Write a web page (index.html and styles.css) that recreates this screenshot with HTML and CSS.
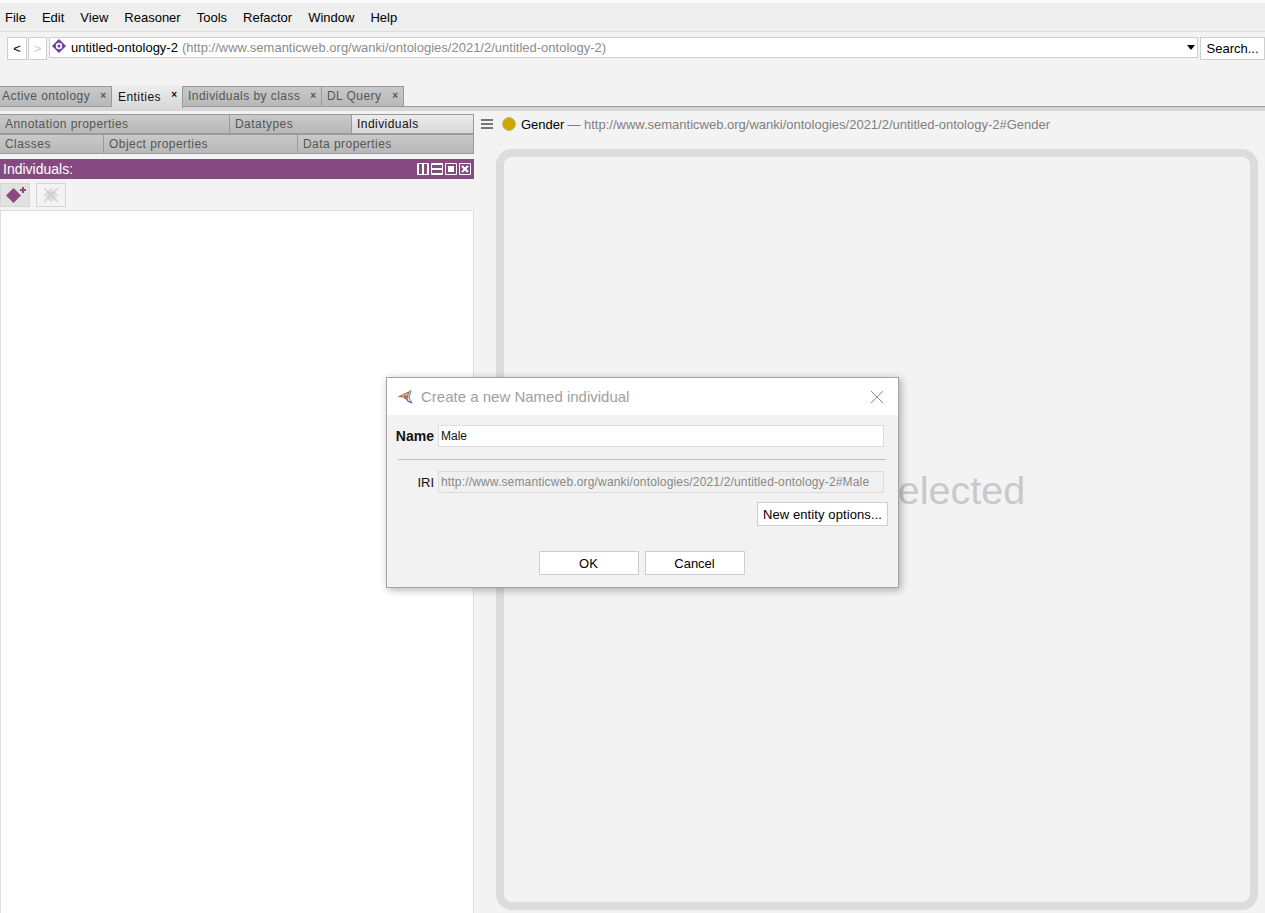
FILE: index.html
```html
<!DOCTYPE html>
<html lang="en">

<head>
    <meta charset="UTF-8">
    <title>untitled-ontology-2</title>
    <link rel="stylesheet" href="styles.css">
</head>

<body>
    <div id="menuBar">
        <span>File</span>
        <span>Edit</span>
        <span>View</span>
        <span>Reasoner</span>
        <span>Tools</span>
        <span>Refactor</span>
        <span>Window</span>
        <span>Help</span>
    </div>

    <div id="navRow">
        <button class="navButton">&lt;</button>
        <button class="navButton disabled">&gt;</button>
        <div id="ontologyBox">
            <svg class="ontologyIcon" width="14" height="14" viewBox="0 0 14 14">
                <path d="M7 0 14 7 7 14 0 7Z" fill="#6b3fa0" />
                <circle cx="7" cy="7" r="3.2" fill="#fff" />
                <circle cx="7" cy="7" r="1.6" fill="#6b3fa0" />
            </svg>
            <span class="ontologyName">untitled-ontology-2</span>
            <span class="ontologyIri">(http://www.semanticweb.org/wanki/ontologies/2021/2/untitled-ontology-2)</span>
            <span class="comboArrow"></span>
        </div>
        <button id="searchButton">Search...</button>
    </div>

    <div id="tabBar">
        <div class="tab tabActiveOntology">Active ontology<span class="tabClose">×</span></div>
        <div class="tab tabEntities selected">Entities<span class="tabClose">×</span></div>
        <div class="tab tabIndividuals">Individuals by class<span class="tabClose">×</span></div>
        <div class="tab tabQuery">DL Query<span class="tabClose">×</span></div>
    </div>
    <div id="tabStrip"></div>

    <div id="workspace">
        <div id="leftPanel">
            <div class="subTabRow">
                <div class="subTab w229">Annotation properties</div>
                <div class="subTab w122">Datatypes</div>
                <div class="subTab selected w122b">Individuals</div>
            </div>
            <div class="subTabRow">
                <div class="subTab w104">Classes</div>
                <div class="subTab w194">Object properties</div>
                <div class="subTab w176">Data properties</div>
            </div>

            <div id="viewHeader">
                <span>Individuals:</span>
                <div id="viewButtons">
                    <svg width="12" height="12" viewBox="0 0 12 12">
                        <path d="M.5.5h11v11H.5Z" fill="none" stroke="#fff" />
                        <path d="M1 1h1v10H1ZM5 1h2v10H5ZM10 1h1v10h-1Z" fill="#fff" />
                    </svg>
                    <svg width="12" height="12" viewBox="0 0 12 12">
                        <path d="M.5.5h11v11H.5Z" fill="none" stroke="#fff" />
                        <path d="M1 1h10v1H1ZM1 5h10v2H1ZM1 10h10v1H1Z" fill="#fff" />
                    </svg>
                    <svg width="12" height="12" viewBox="0 0 12 12">
                        <path d="M.5.5h11v11H.5Z" fill="none" stroke="#fff" />
                        <path d="M3 3h6v6H3Z" fill="#fff" />
                    </svg>
                    <svg width="12" height="12" viewBox="0 0 12 12">
                        <path d="M.5.5h11v11H.5Z" fill="none" stroke="#fff" />
                        <path d="M3 3l6 6M9 3l-6 6" fill="none" stroke="#fff" stroke-width="2" />
                    </svg>
                </div>
            </div>

            <div id="viewToolbar">
                <div class="toolButton pressed">
                    <svg width="24" height="20" viewBox="0 0 24 20">
                        <path d="M10.5 3 18 10.5 10.5 18 3 10.5Z" fill="#8a4a80" />
                        <path d="M17 5h6M20 2v6" stroke="#8a4a80" stroke-width="2" />
                    </svg>
                </div>
                <div class="toolButton">
                    <svg width="20" height="20" viewBox="0 0 20 20" fill="none">
                        <path d="M10 3.5 16.5 10 10 16.5 3.5 10Z" fill="#e4e4e4" stroke="#d0d0d0" />
                        <circle cx="10" cy="10" r="3" stroke="#d0d0d0" />
                        <path d="M3.5 3.5l13 13M16.5 3.5l-13 13" stroke="#cdcdcd" stroke-width="1.2" />
                    </svg>
                </div>
            </div>

            <div id="individualList"></div>
        </div>

        <div id="rightPanel">
            <div id="entityHeader">
                <div class="hamburger"><i></i><i></i><i></i></div>
                <span class="entityDot"></span>
                <span class="entityName">Gender</span>
                <span class="entityIri">— http://www.semanticweb.org/wanki/ontologies/2021/2/untitled-ontology-2#Gender</span>
            </div>
            <div id="entityFrame">
                <p>Nothing selected</p>
            </div>
        </div>
    </div>

    <div id="dialog">
        <div id="dialogTitle">
            <svg width="16" height="16" viewBox="0 0 16 16" fill="none">
                <path d="M1.5 7.5 11 3 9 8Z" stroke="#b5673a" stroke-width="1.2" />
                <path d="M13 1 11 9l3 5" stroke="#5b8fc4" stroke-width="1.1" />
                <path d="M7 7l3 5 4 2" stroke="#8a3fa0" stroke-width="1.2" />
                <circle cx="8" cy="8" r="2" stroke="#b5673a" />
            </svg>
            <span class="dialogCaption">Create a new Named individual</span>
            <svg class="dialogClose" width="14" height="14" viewBox="0 0 14 14">
                <path d="M1 1l12 12M13 1 1 13" stroke="#8c8c8c" />
            </svg>
        </div>
        <div id="dialogBody">
            <div class="fieldRow">
                <label class="fieldLabel bold">Name</label>
                <div class="fieldInput">Male</div>
            </div>
            <div class="dialogRule"></div>
            <div class="fieldRow">
                <label class="fieldLabel iriLabel">IRI</label>
                <div class="fieldInput readOnly">http://www.semanticweb.org/wanki/ontologies/2021/2/untitled-ontology-2#Male</div>
            </div>
            <div class="optionsRow">
                <button id="optionsButton">New entity options...</button>
            </div>
            <div class="buttonRow">
                <button class="dialogButton">OK</button>
                <button class="dialogButton">Cancel</button>
            </div>
        </div>
    </div>
</body>

</html>
```

FILE: styles.css
```css
* {
    box-sizing: border-box;
}

html,
body {
    height: 913px;
    overflow: hidden;
}

body {
    margin: 0;
    position: relative;
    font-family: "Liberation Sans", Arial, sans-serif;
    font-size: 13px;
    color: #000;
    background-color: #f3f3f3;
    border-top: 3px solid #fbfbfb;
}

button {
    font-family: inherit;
    font-size: 13px;
    color: #000;
    background-color: #fff;
    border: 1px solid #cfcfcf;
    padding: 0;
}

/* Top rows */
#menuBar {
    height: 29px;
    display: flex;
    align-items: center;
    gap: 16px;
    padding: 0 0 0 5px;
    background-color: #eeeeee;
    border-bottom: 1px solid #dcdcdc;
}

#navRow {
    height: 23px;
    margin-top: 5px;
    padding-left: 7px;
    display: flex;
    gap: 1px;
}

.navButton {
    width: 20px;
    height: 23px;
    font-size: 13px;
}

.navButton.disabled {
    width: 19px;
    color: #c8c8c8;
}

#ontologyBox {
    width: 1150px;
    height: 21px;
    margin-left: 1px;
    padding-left: 2px;
    display: flex;
    align-items: center;
    background-color: #fff;
    border: 1px solid #cfcfcf;
    position: relative;
}

.ontologyIcon {
    margin-top: -3px;
    margin-right: 5px;
}

.ontologyIri {
    margin-left: 4px;
    color: #8c8c8c;
}

.comboArrow {
    position: absolute;
    right: 2px;
    top: 7px;
    border-top: 5px solid #000;
    border-left: 4px solid transparent;
    border-right: 4px solid transparent;
}

#searchButton {
    width: 65px;
    height: 23px;
    margin-left: 1px;
}

/* Workspace tabs */
#tabBar {
    display: flex;
    height: 20px;
    margin-top: 26px;
    font-size: 12px;
}

.tab {
    height: 20px;
    display: flex;
    align-items: center;
    padding-left: 2px;
    padding-bottom: 2px;
    letter-spacing: 0.45px;
    color: #555;
    background: linear-gradient(#c9c9c9, #b8b8b8);
    border: 1px solid #9a9a9a;
    border-left: 0;
    border-bottom: 0;
    position: relative;
}

.tab.selected {
    color: #111;
    background: linear-gradient(#ededed, #d8d8d8);
    height: 22px;
    z-index: 1;
    border-top: 0;
    padding-left: 6px;
    padding-bottom: 0;
}

.tabClose {
    position: absolute;
    right: 5px;
    top: 3px;
    font-size: 10px;
    font-weight: bold;
    letter-spacing: 0;
}

.tabActiveOntology {
    width: 112px;
}

.tabEntities {
    width: 71px;
}

.tabIndividuals {
    width: 139px;
    padding-left: 5px;
}

.tabQuery {
    width: 82px;
    padding-left: 5px;
}

#tabStrip {
    height: 5px;
    border-top: 1px solid #9a9a9a;
    background-color: #d6d6d6;
}

/* Main split */
#workspace {
    display: flex;
    height: 802px;
}

#leftPanel {
    width: 474px;
    padding-top: 3px;
    flex-shrink: 0;
}

.subTabRow {
    display: flex;
    height: 20px;
    font-size: 12px;
}

.subTab {
    height: 20px;
    padding-left: 5px;
    line-height: 19px;
    letter-spacing: 0.45px;
    color: #555;
    background: linear-gradient(#c9c9c9, #b8b8b8);
    border: 1px solid #9a9a9a;
    border-left: 0;
}

.subTab.selected {
    color: #111;
    background: linear-gradient(#ededed, #d8d8d8);
}

.w229 {
    width: 230px;
}

.w122 {
    width: 122px;
}

.w122b {
    width: 122px;
}

.w104 {
    width: 104px;
}

.w194 {
    width: 194px;
}

.w176 {
    width: 176px;
}

#viewHeader {
    height: 20px;
    margin-top: 5px;
    padding: 0 3px;
    display: flex;
    align-items: center;
    justify-content: space-between;
    font-size: 14px;
    color: #fff;
    background-color: #874a80;
}

#viewButtons {
    display: flex;
    gap: 2px;
}

#viewButtons svg {
    display: block;
}

#viewToolbar {
    height: 31px;
    padding: 4px 0 0 0;
    display: flex;
    gap: 6px;
}

.toolButton {
    width: 30px;
    height: 24px;
    display: flex;
    align-items: center;
    justify-content: center;
    border: 1px solid #d6d6d6;
}

.toolButton.pressed {
    background-color: #e2e2e2;
}

#individualList {
    height: 703px;
    background-color: #fff;
    border: 1px solid #dedede;
    border-bottom: 0;
}

#rightPanel {
    flex: 1;
    padding: 0 7px 0 7px;
    display: flex;
    flex-direction: column;
}

#entityHeader {
    height: 26px;
    display: flex;
    align-items: center;
    color: #000;
}

.hamburger {
    width: 12px;
    display: flex;
    flex-direction: column;
    gap: 2px;
}

.hamburger i {
    display: block;
    height: 2px;
    background-color: #777;
}

.entityDot {
    width: 14px;
    height: 14px;
    margin-left: 9px;
    border-radius: 50%;
    background-color: #cfa500;
    border: 1px solid #c8ba78;
}

.entityName {
    margin-left: 5px;
}

.entityIri {
    margin-left: 3px;
    color: #808080;
}

#entityFrame {
    width: 762px;
    height: 761px;
    margin-left: 15px;
    margin-top: 12px;
    border: 8px solid #dcdcdc;
    border-radius: 16px;
    background-color: #f3f3f3;
    display: flex;
    align-items: center;
    justify-content: center;
}

#entityFrame p {
    margin: 0;
    font-size: 39.5px;
    color: #c9c9c9;
    position: relative;
    top: -39px;
    left: 1px;
}

/* Dialog */
#dialog {
    position: absolute;
    left: 386px;
    top: 374px;
    width: 513px;
    height: 211px;
    background-color: #f2f2f2;
    border: 1px solid #a3a3a3;
    box-shadow: 2px 2px 8px rgba(0, 0, 0, 0.3);
    z-index: 5;
}

#dialogTitle {
    height: 37px;
    padding: 0 14px 0 11px;
    display: flex;
    align-items: center;
    background-color: #fff;
}

.dialogCaption {
    margin-left: 7px;
    font-size: 15px;
    color: #a0a0a0;
}

.dialogClose {
    margin-left: auto;
}

#dialogBody {
    padding: 10px 14px 0 9px;
}

.fieldRow {
    display: flex;
    align-items: center;
    justify-content: flex-end;
    gap: 4px;
}

.fieldLabel {
    font-size: 14px;
    color: #111;
    flex-shrink: 0;
}

.iriLabel {
    font-size: 13px;
}

.bold {
    font-weight: bold;
}

.fieldInput {
    width: 446px;
    height: 22px;
    flex-shrink: 0;
    padding-left: 2px;
    line-height: 20px;
    background-color: #fff;
    border: 1px solid #dcdcdc;
    font-size: 12px;
    color: #111;
}

.fieldInput.readOnly {
    background-color: #f0f0f0;
    color: #888;
    letter-spacing: 0.16px;
}

.dialogRule {
    height: 1px;
    margin: 12px 0 11px 2px;
    width: 488px;
    background-color: #c4c4c4;
}

.optionsRow {
    display: flex;
    justify-content: flex-end;
    margin-top: 9px;
    margin-right: -4px;
}

#optionsButton {
    width: 131px;
    height: 24px;
    letter-spacing: 0.1px;
}

.buttonRow {
    display: flex;
    justify-content: center;
    gap: 6px;
    margin-top: 25px;
    padding-left: 3px;
}

.dialogButton {
    width: 100px;
    height: 24px;
}
```
